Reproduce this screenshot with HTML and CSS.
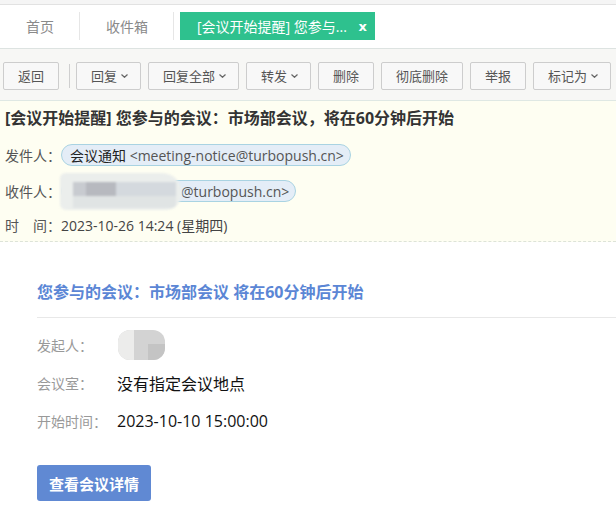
FILE: index.html
```html
<!DOCTYPE html>
<html lang="zh-CN">
<head>
<meta charset="utf-8">
<title>邮件</title>
<link rel="stylesheet" href="styles.css">
</head>
<body>
<div class="topstrip"></div>
<div class="tabbar">
  <div class="tab">首页</div>
  <div class="tab">收件箱</div>
  <div class="tab active"><span>[会议开始提醒] 您参与...</span><span class="close">x</span></div>
</div>
<div class="toolbar">
  <button class="btn">返回</button>
  <span class="sep"></span>
  <button class="btn dd">回复<svg class="chev" viewBox="0 0 7 4"><path d="M0.5 0.5L3.5 3.3L6.5 0.5"/></svg></button>
  <button class="btn dd">回复全部<svg class="chev" viewBox="0 0 7 4"><path d="M0.5 0.5L3.5 3.3L6.5 0.5"/></svg></button>
  <button class="btn dd">转发<svg class="chev" viewBox="0 0 7 4"><path d="M0.5 0.5L3.5 3.3L6.5 0.5"/></svg></button>
  <button class="btn">删除</button>
  <button class="btn">彻底删除</button>
  <button class="btn">举报</button>
  <button class="btn dd">标记为<svg class="chev" viewBox="0 0 7 4"><path d="M0.5 0.5L3.5 3.3L6.5 0.5"/></svg></button>
</div>
<div class="mailhead">
  <h1 class="subject">[会议开始提醒] 您参与的会议：市场部会议，将在60分钟后开始</h1>
  <div class="row">
    <span class="label">发件人：</span>
    <span class="pill"><span class="name">会议通知</span> &lt;meeting-notice@turbopush.cn&gt;</span>
  </div>
  <div class="row">
    <span class="label">收件人：</span>
    <span class="pill"><span class="masked"><span class="blob"><i class="m1"></i><i class="m2"></i><i class="m3"></i><i class="m4"></i></span></span>@turbopush.cn&gt;</span>
  </div>
  <div class="row time">
    <span class="label">时　间：</span>
    <span class="value">2023-10-26 14:24 (星期四)</span>
  </div>
</div>
<div class="content">
  <h2 class="ctitle">您参与的会议：市场部会议 将在60分钟后开始</h2>
  <div class="crow">
    <span class="clabel">发起人：</span>
    <span class="avatar"><i class="a1"></i><i class="a2"></i></span>
  </div>
  <div class="crow">
    <span class="clabel">会议室：</span>
    <span class="cvalue">没有指定会议地点</span>
  </div>
  <div class="crow">
    <span class="clabel">开始时间：</span>
    <span class="cvalue">2023-10-10 15:00:00</span>
  </div>
  <button class="detail">查看会议详情</button>
</div>
</body>
</html>
```
FILE: styles.css
```css
* { box-sizing: border-box; }
html, body { margin: 0; padding: 0; background: #fff; }
body {
  width: 616px;
  font-family: "Open Sans", "Noto Sans CJK SC", sans-serif;
  color: #333;
  overflow: hidden;
}
.topstrip {
  height: 5px;
  background: #f5f5f5;
  border-bottom: 1px solid #e2e2e2;
}
.tabbar {
  display: flex;
  align-items: stretch;
  padding: 7px 0 8px;
  border-bottom: 1px solid #dde3e1;
  background: #fff;
}
.tab {
  height: 28px;
  display: flex;
  align-items: center;
  padding: 0 25px 0 26px;
  font-size: 14px;
  color: #8a8a8a;
  border-right: 1px solid #e6e6e6;
}
.tab.active {
  border-right: none;
  margin-left: 6px;
  background: #2ec18e;
  color: #fff;
  padding: 0 8px 0 17px;
  width: 195px;
  justify-content: space-between;
}
.tab .close {
  font-weight: bold;
  font-size: 13px;
  font-family: "DejaVu Sans", sans-serif;
}
.toolbar {
  display: flex;
  align-items: center;
  gap: 7px;
  padding: 13px 0 10px 3px;
  background: #f7f7f5;
}
.btn {
  height: 28px;
  padding: 0 14px;
  border: 1px solid #cdcdcd;
  border-radius: 2px;
  background: #f8f8f8;
  font-family: "Open Sans", "Noto Sans CJK SC", sans-serif;
  font-size: 13px;
  color: #555;
  display: flex;
  align-items: center;
  line-height: 1;
}
.btn.dd { padding-right: 12px; }
.chev {
  width: 7px;
  height: 4px;
  margin-left: 4px;
  fill: none;
  stroke: #666;
  stroke-width: 1.2;
}
.sep {
  width: 1px;
  height: 24px;
  background: #cfcfcf;
  margin-left: 3px;
  margin-right: -1px;
}
.mailhead {
  background: #fefef2;
  border-top: 1px solid #dfe8e4;
  border-bottom: 1px dashed #dde3d8;
  padding: 5px 5px 0;
}
.subject {
  margin: 0;
  font-size: 16px;
  font-weight: bold;
  line-height: 24px;
  color: #333;
}
.row {
  height: 36px;
  display: flex;
  align-items: center;
  font-size: 14px;
}
.mailhead .row:first-of-type { margin-top: 7px; }
.row.time { height: 32px; }
.label {
  width: 56px;
  flex: none;
  color: #555;
}
.value { color: #444; }
.pill {
  height: 22px;
  display: inline-flex;
  align-items: center;
  padding: 0 6px 0 8px;
  border: 1px solid #a9d3e2;
  border-radius: 11px;
  background: #e4edf7;
  color: #555;
  white-space: pre;
}
.pill .name { color: #222; }
.masked {
  position: relative;
  display: inline-block;
  width: 111px;
  height: 16px;
}
.blob {
  position: absolute;
  left: -10px;
  top: -10px;
  width: 122px;
  height: 37px;
  border-radius: 16px 60px 50px 18px;
  background: #ebeeec;
  filter: blur(1px);
  overflow: hidden;
}
.blob i {
  position: absolute;
  top: 9px;
  height: 25px;
}
.blob .m1 { left: 13px; width: 30px; background: #c8cbd0; top: 9px; height: 14px; }
.blob .m2 { left: 26px; width: 30px; background: #b7b9bf; top: 9px; height: 14px; }
.blob .m3 { left: 56px; width: 60px; background: #d4d9de; top: 9px; height: 14px; }
.blob .m4 { left: 13px; width: 103px; background: #e0e4e4; top: 23px; height: 12px; }
.content {
  padding: 38px 0 0 37px;
}
.ctitle {
  margin: 0;
  font-size: 16px;
  font-weight: bold;
  line-height: 24px;
  color: #5b86d5;
  padding-bottom: 13px;
  border-bottom: 1px solid #e8e8e8;
}
.crow {
  height: 38px;
  display: flex;
  align-items: center;
}
.ctitle + .crow { margin-top: 8px; }
.clabel {
  width: 80px;
  flex: none;
  font-size: 14px;
  color: #999;
}
.cvalue {
  font-size: 16px;
  color: #111;
}
.avatar {
  position: relative;
  width: 47px;
  height: 30px;
  margin-left: 1px;
  border-radius: 12px;
  background: #d3d3d3;
  overflow: hidden;
  filter: blur(0.6px);
}
.avatar i { position: absolute; }
.avatar .a1 { left: 0; top: 0; width: 16px; height: 30px; background: #ececeb; }
.avatar .a2 { left: 30px; top: 14px; width: 17px; height: 16px; background: #c4c4c4; }
.detail {
  margin-top: 25px;
  height: 36px;
  padding: 0 12px;
  border: none;
  border-radius: 3px;
  background: #6089d3;
  color: #fff;
  font-family: "Noto Sans CJK SC", sans-serif;
  font-size: 15px;
  font-weight: bold;
}
```
